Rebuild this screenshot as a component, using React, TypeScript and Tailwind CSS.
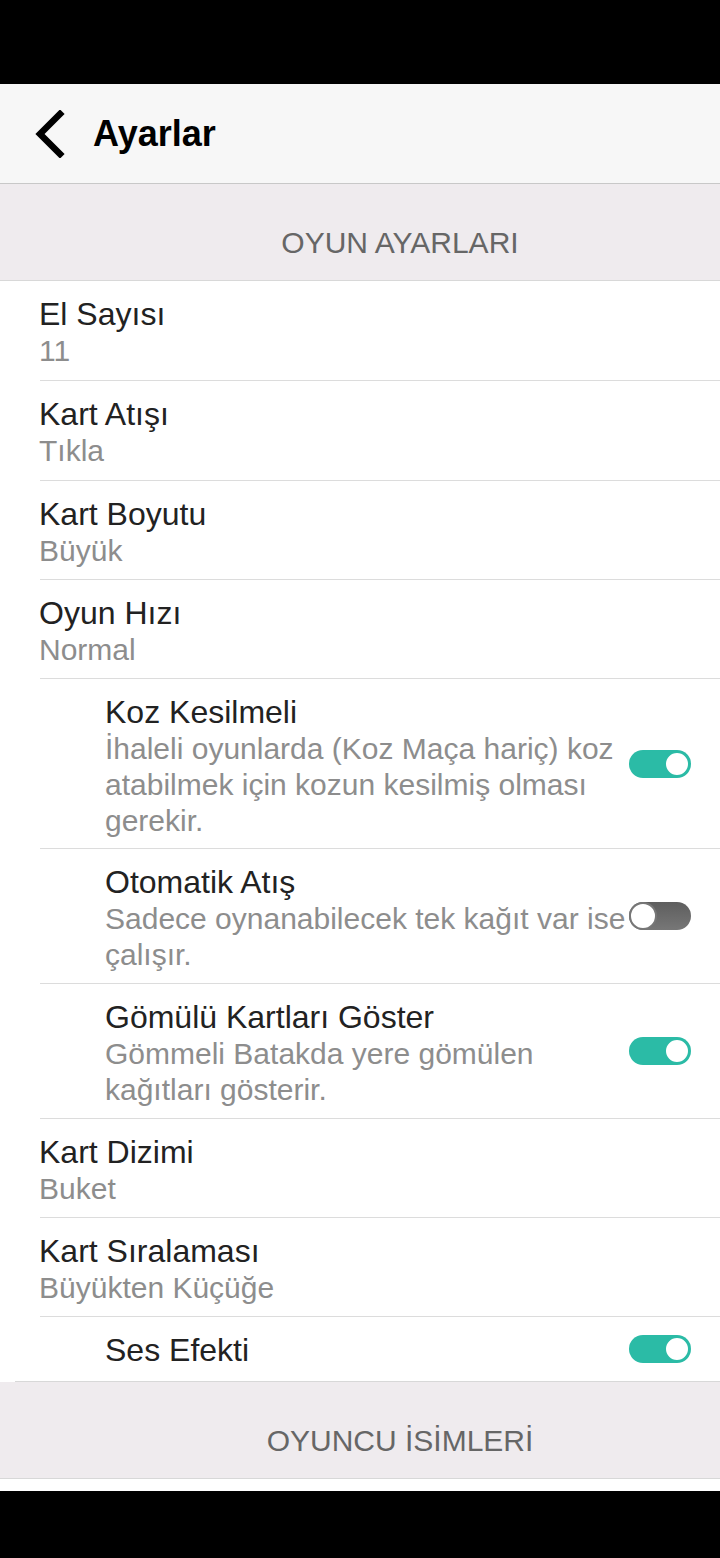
import React from 'react';

type Item = {
  title: string;
  sub?: string;
  lines?: string[];
  toggle?: boolean;
  indent?: boolean;
  pb: string;
};

const items: Item[] = [
  { title: 'El Sayısı', sub: '11', pb: 'pb-[11px]' },
  { title: 'Kart Atışı', sub: 'Tıkla', pb: 'pb-[11px]' },
  { title: 'Kart Boyutu', sub: 'Büyük', pb: 'pb-[10px]' },
  { title: 'Oyun Hızı', sub: 'Normal', pb: 'pb-[10px]' },
  {
    title: 'Koz Kesilmeli',
    lines: ['İhaleli oyunlarda (Koz Maça hariç) koz', 'atabilmek için kozun kesilmiş olması', 'gerekir.'],
    toggle: true,
    indent: true,
    pb: 'pb-[9px]',
  },
  {
    title: 'Otomatik Atış',
    lines: ['Sadece oynanabilecek tek kağıt var ise', 'çalışır.'],
    toggle: false,
    indent: true,
    pb: 'pb-[10px]',
  },
  {
    title: 'Gömülü Kartları Göster',
    lines: ['Gömmeli Batakda yere gömülen', 'kağıtları gösterir.'],
    toggle: true,
    indent: true,
    pb: 'pb-[10px]',
  },
  { title: 'Kart Dizimi', sub: 'Buket', pb: 'pb-[10px]' },
  { title: 'Kart Sıralaması', sub: 'Büyükten Küçüğe', pb: 'pb-[10px]' },
  { title: 'Ses Efekti', toggle: true, indent: true, pb: 'pb-[12px]' },
];

function Toggle({ on }: { on: boolean }) {
  if (on) {
    return (
      <div className="flex h-[28px] w-[62px] shrink-0 items-center justify-end rounded-full bg-[#2bbba6] pr-[1px]">
        <div className="h-[26px] w-[26px] rounded-full border-2 border-[#2bbba6] bg-white" />
      </div>
    );
  }
  return (
    <div className="flex h-[28px] w-[62px] shrink-0 items-center justify-start rounded-full bg-gradient-to-b from-[#5e5e5e] to-[#777777]">
      <div className="h-[28px] w-[28px] rounded-full border-2 border-[#777] bg-white" />
    </div>
  );
}

function Row({ item }: { item: Item }) {
  return (
    <div className={`flex items-center pr-[29px] ${item.indent ? 'pl-[105px]' : 'pl-[39px]'}`}>
      <div className={`flex-1 pt-[14px] ${item.pb}`}>
        <div className="text-[32px] leading-[38px] text-[#222]">{item.title}</div>
        {item.sub && <div className="text-[30px] leading-[36px] text-[#8d8d8d]">{item.sub}</div>}
        {item.lines && (
          <div className="whitespace-nowrap text-[30px] leading-[36px] text-[#8d8d8d]">
            {item.lines.map((l, i) => (
              <div key={i}>{l}</div>
            ))}
          </div>
        )}
      </div>
      {item.toggle !== undefined && <Toggle on={item.toggle} />}
    </div>
  );
}

function SectionHeader({ label }: { label: string }) {
  return (
    <div className="flex h-[97px] items-center justify-center border-b border-[#d8d8d8] bg-[#efebee] pl-[80px] pt-[20px] text-[30px] text-[#666]">
      {label}
    </div>
  );
}

export default function App() {
  return (
    <div className="flex h-[1558px] w-[720px] flex-col bg-black font-['Liberation_Sans',Arial,sans-serif]">
      <div className="h-[84px]" />
      <div className="flex h-[100px] items-center gap-[28px] border-b border-[#c8c8c8] bg-[#f7f7f7] pl-[33px]">
        <svg width="32" height="48" viewBox="0 0 32 48" fill="none">
          <path d="M27 4 L7 24 L27 44" stroke="#000" strokeWidth="6.5" strokeLinecap="square" />
        </svg>
        <span className="text-[36px] font-bold text-black">Ayarlar</span>
      </div>
      <div className="bg-white">
        <SectionHeader label="OYUN AYARLARI" />
        {items.map((item, i) => (
          <div key={i}>
            <Row item={item} />
            {i < items.length - 1 && <div className="ml-[40px] h-px bg-[#dcdcdc]" />}
          </div>
        ))}
        <div className="ml-[15px] border-t border-[#d8d8d8]" />
        <SectionHeader label="OYUNCU İSİMLERİ" />
        <div className="h-[12px]" />
      </div>
    </div>
  );
}
